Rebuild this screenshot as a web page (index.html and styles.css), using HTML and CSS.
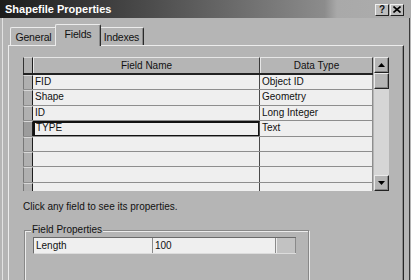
FILE: index.html
```html
<!DOCTYPE html>
<html lang="en">
<head>
    <meta charset="UTF-8">
    <title>Shapefile Properties</title>
    <link rel="stylesheet" href="styles.css">
</head>
<body>
<div class="window">
    <div class="titlebar">
        <span class="title">Shapefile Properties</span>
        <div class="caption-buttons">
            <span class="cap-btn help">?</span>
            <span class="cap-btn">
                <svg width="8" height="7" viewBox="0 0 8 7"><path d="M0.5 0.5 L7.5 6.5 M7.5 0.5 L0.5 6.5" stroke="#000" stroke-width="1.6"/></svg>
            </span>
        </div>
    </div>
    <div class="client">
        <div class="tabs">
            <div class="tab tab-general">General</div>
            <div class="tab tab-fields active">Fields</div>
            <div class="tab tab-indexes">Indexes</div>
        </div>
        <div class="panel">
            <div class="grid-wrap">
                <div class="grid">
                    <div class="row head">
                        <div class="rh"></div>
                        <div class="cell c1">Field Name</div>
                        <div class="cell c2">Data Type</div>
                    </div>
                    <div class="row">
                        <div class="rh"></div>
                        <div class="cell c1">FID</div>
                        <div class="cell c2">Object ID</div>
                    </div>
                    <div class="row">
                        <div class="rh"></div>
                        <div class="cell c1">Shape</div>
                        <div class="cell c2">Geometry</div>
                    </div>
                    <div class="row">
                        <div class="rh"></div>
                        <div class="cell c1">ID</div>
                        <div class="cell c2">Long Integer</div>
                    </div>
                    <div class="row current">
                        <div class="rh"></div>
                        <div class="cell c1 focus">TYPE</div>
                        <div class="cell c2">Text</div>
                    </div>
                    <div class="row">
                        <div class="rh"></div>
                        <div class="cell c1"></div>
                        <div class="cell c2"></div>
                    </div>
                    <div class="row">
                        <div class="rh"></div>
                        <div class="cell c1"></div>
                        <div class="cell c2"></div>
                    </div>
                    <div class="row">
                        <div class="rh"></div>
                        <div class="cell c1"></div>
                        <div class="cell c2"></div>
                    </div>
                    <div class="row">
                        <div class="rh"></div>
                        <div class="cell c1"></div>
                        <div class="cell c2"></div>
                    </div>
                </div>
                <div class="scrollbar">
                    <div class="sb-btn">
                        <svg width="7" height="4" viewBox="0 0 7 4"><polygon points="3.5,0 7,4 0,4" fill="#000"/></svg>
                    </div>
                    <div class="sb-thumb"></div>
                    <div class="sb-track"></div>
                    <div class="sb-btn">
                        <svg width="7" height="4" viewBox="0 0 7 4"><polygon points="0,0 7,0 3.5,4" fill="#000"/></svg>
                    </div>
                </div>
            </div>
            <div class="hint">Click any field to see its properties.</div>
            <fieldset class="props">
                <legend>Field Properties</legend>
                <div class="prop-row">
                    <div class="prop-name">Length</div>
                    <div class="prop-value">100</div>
                    <div class="prop-extra"></div>
                </div>
            </fieldset>
        </div>
    </div>
</div>
</body>
</html>
```

FILE: styles.css
```css
body {
    margin: 0;
    padding: 0;
    background-color: #b5b5b5;
    font-family: 'Liberation Sans', Arial, sans-serif;
    font-size: 10px;
    color: #111;
}

.window {
    width: 411px;
    height: 280px;
    overflow: hidden;
    display: flex;
    flex-direction: column;
}

/* title bar */
.titlebar {
    flex: none;
    height: 18px;
    display: flex;
    align-items: center;
    justify-content: space-between;
    padding: 0 7px 0 5px;
    background: linear-gradient(to right, #1c1c1c 0%, #4a4a4a 35%, #777 65%, #8c8c8c 79%, #a9a9a9 82%, #adadad 100%);
}

.title {
    color: #fff;
    font-weight: bold;
    font-size: 11px;
}

.caption-buttons {
    display: flex;
    gap: 1px;
    margin-top: 1px;
}

.cap-btn {
    width: 14px;
    height: 12px;
    box-sizing: border-box;
    display: flex;
    align-items: center;
    justify-content: center;
    background-color: #bdbdbd;
    border: 1px solid;
    border-color: #f0f0f0 #202020 #202020 #f0f0f0;
    font-weight: bold;
    font-size: 10px;
    line-height: 10px;
}

/* dialog body */
.client {
    flex: 1 0 auto;
    display: flex;
    flex-direction: column;
    margin: 0 1px 0 2px;
    padding: 6px 5px 0 5px;
    border-left: 1px solid #e2e2e2;
    border-right: 1px solid #3a3a3a;
}

.tabs {
    flex: none;
    display: flex;
    align-items: flex-end;
    height: 21px;
    padding-left: 2px;
}

.tab {
    height: 18px;
    box-sizing: border-box;
    display: flex;
    align-items: center;
    justify-content: center;
    border-top: 1px solid #ececec;
    border-left: 1px solid #ececec;
    border-right: 1px solid #2a2a2a;
    border-radius: 2px 2px 0 0;
    box-shadow: inset -1px 0 #888;
    font-size: 10.5px;
    letter-spacing: -0.2px;
}

.tab-general {
    width: 47px;
}

.tab-fields {
    width: 46px;
    margin: 0 -2px;
}

.tab-indexes {
    width: 45px;
}

.tab.active {
    height: 22px;
    margin-bottom: -1px;
    background-color: #b5b5b5;
    position: relative;
    z-index: 1;
    padding-bottom: 3px;
}

.panel {
    flex: 1 0 auto;
    padding: 11px 0 0 14px;
    border-top: 1px solid #ececec;
    border-left: 1px solid #ececec;
    border-right: 1px solid #262626;
    box-shadow: inset -1px 0 #8a8a8a;
}

/* data grid */
.grid-wrap {
    display: flex;
    height: 134px;
}

.grid {
    width: 350px;
    height: 134px;
    overflow: hidden;
    background-color: #efefef;
}

.row {
    display: flex;
    height: 15.4px;
    box-sizing: border-box;
    border-bottom: 1px solid #8e8e8e;
}

.rh {
    width: 10px;
    box-sizing: border-box;
    background-color: #b0b0b0;
    border-left: 1px solid #777;
    border-top: 1px solid #d8d8d8;
    border-right: 1px solid #1e1e1e;
}

.cell {
    box-sizing: border-box;
    padding-left: 2px;
    line-height: 14px;
    white-space: nowrap;
}

.c1 {
    width: 227px;
    border-right: 1px solid #4a4a4a;
}

.c2 {
    width: 113px;
    border-right: 1px solid #8e8e8e;
}

.row.head {
    height: 18px;
    border-bottom: 2px solid #222;
    background-color: #b5b5b5;
}

.row.head .cell {
    text-align: center;
    padding-left: 0;
    line-height: 16px;
    border-top: 1px solid #e6e6e6;
    border-left: 1px solid #e6e6e6;
    border-right: 1px solid #3a3a3a;
}

.row.head .rh {
    border-left: 1px solid #333;
}

.row.current .rh {
    background-color: #9c9c9c;
}

.focus {
    box-shadow: inset 0 0 0 1px #111;
    border-top: 1px solid #111;
    border-left: 1px solid #111;
    line-height: 12px;
}

/* scroll bar */
.scrollbar {
    width: 15px;
    margin-left: 1px;
    display: flex;
    flex-direction: column;
}

.sb-btn,
.sb-thumb {
    height: 16px;
    box-sizing: border-box;
    background-color: #b5b5b5;
    border: 1px solid;
    border-color: #eaeaea #222 #222 #eaeaea;
    box-shadow: inset -1px -1px #858585;
}

.sb-btn {
    display: flex;
    align-items: center;
    justify-content: center;
}

.sb-track {
    flex: 1;
    background-color: #d6d6d6;
}

/* bottom part */
.hint {
    margin-top: 10px;
    line-height: 12px;
}

.props {
    width: 285px;
    height: 70px;
    box-sizing: border-box;
    margin: 11px 0 0 1px;
    padding: 1px 0 0 8px;
    border: 1px solid #888;
    box-shadow: inset 1px 1px #ececec, 1px 1px #ececec;
}

.props legend {
    padding: 0 1px;
    margin-left: -2px;
    line-height: 12px;
    background-color: #b5b5b5;
}

.prop-row {
    display: flex;
    width: 263px;
    height: 17px;
    box-sizing: border-box;
    border-top: 1px solid #6a6a6a;
    border-left: 1px solid #6a6a6a;
    border-bottom: 1px solid #dcdcdc;
}

.prop-name,
.prop-value {
    background-color: #efefef;
    padding-left: 2px;
    line-height: 15px;
    box-sizing: border-box;
}

.prop-name {
    width: 119px;
    border-right: 1px solid #8a8a8a;
}

.prop-value {
    width: 123px;
    border-right: 1px solid #8a8a8a;
}

.prop-extra {
    width: 20px;
    box-sizing: border-box;
    background-color: #c2c2c2;
    border-right: 1px solid #8a8a8a;
    box-shadow: inset 1px 0 #ececec;
}
```
